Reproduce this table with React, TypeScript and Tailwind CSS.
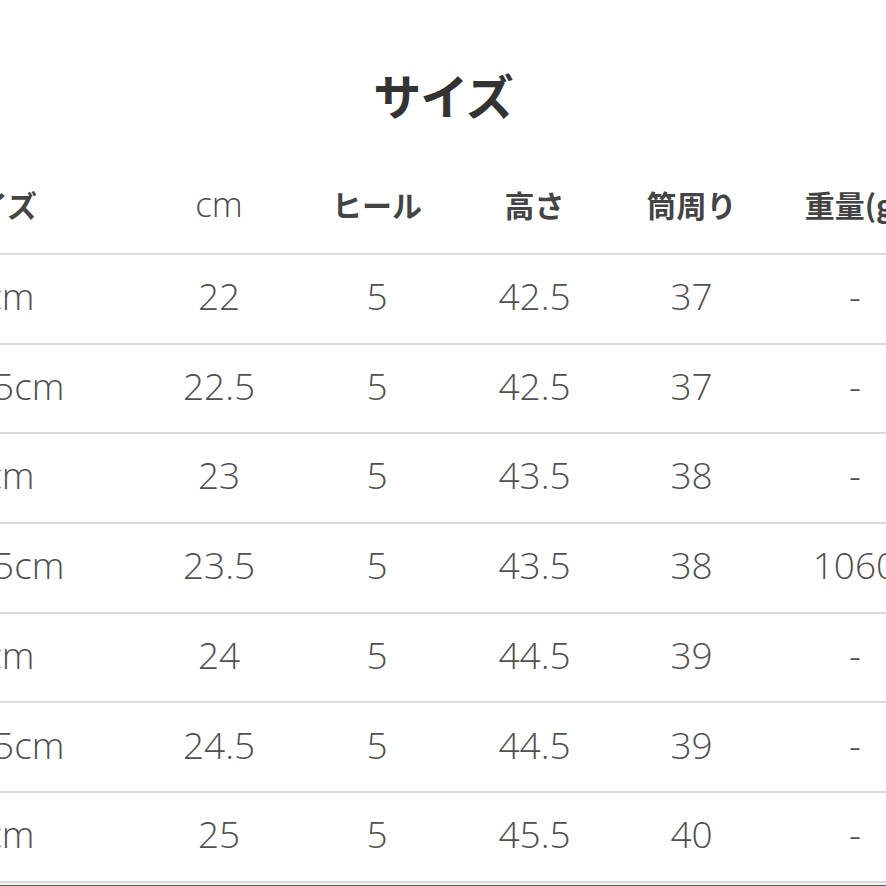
const rows = [
  ["22cm", "22", "5", "42.5", "37", "-"],
  ["22.5cm", "22.5", "5", "42.5", "37", "-"],
  ["23cm", "23", "5", "43.5", "38", "-"],
  ["23.5cm", "23.5", "5", "43.5", "38", "1060"],
  ["24cm", "24", "5", "44.5", "39", "-"],
  ["24.5cm", "24.5", "5", "44.5", "39", "-"],
  ["25cm", "25", "5", "45.5", "40", "-"],
]

const cols = "grid grid-cols-[300px_158px_158px_157px_157px_170px]"
const latin = { fontFamily: '"Open Sans", "Noto Sans CJK JP", sans-serif' }

export default function App() {
  return (
    <div
      className="w-[886px] h-[886px] overflow-hidden bg-white"
      style={{ fontFamily: '"Noto Sans CJK JP", "Noto Sans", sans-serif' }}
    >
      {/* title */}
      <div className="h-[160px] flex justify-center pt-[70px]">
        <h1 className="text-[48px] leading-none font-bold text-[#333] tracking-[-1px]">サイズ</h1>
      </div>

      <div className="ml-[-160px] w-[1100px]">
        {/* header */}
        <div className={`${cols} h-[95px] items-center pb-[4px] border-b-2 border-[#dadada] text-[30px] font-bold text-[#444]`}>
          <div className="pl-[108px]">サイズ</div>
          <div className="text-center font-[350] text-[#4a4a4a] text-[35px]" style={latin}>
            cm
          </div>
          <div className="text-center">ヒール</div>
          <div className="text-center">高さ</div>
          <div className="text-center">筒周り</div>
          <div className="text-center">重量(g)</div>
        </div>

        {/* body */}
        {rows.map((r) => (
          <div
            key={r[0]}
            className={`${cols} h-[89.7px] items-center pb-[6px] border-b-2 border-[#dadada] text-[37px] font-[350] text-[#505050]`}
            style={latin}
          >
            <div className="pl-[102px]">{r[0]}</div>
            {r.slice(1).map((c, i) => (
              <div key={i} className="text-center">
                {c}
              </div>
            ))}
          </div>
        ))}
        <div className="h-[2px] bg-[#f4f4f4]" />
        <div className="h-[4px] bg-[#555]" />
      </div>
    </div>
  )
}
